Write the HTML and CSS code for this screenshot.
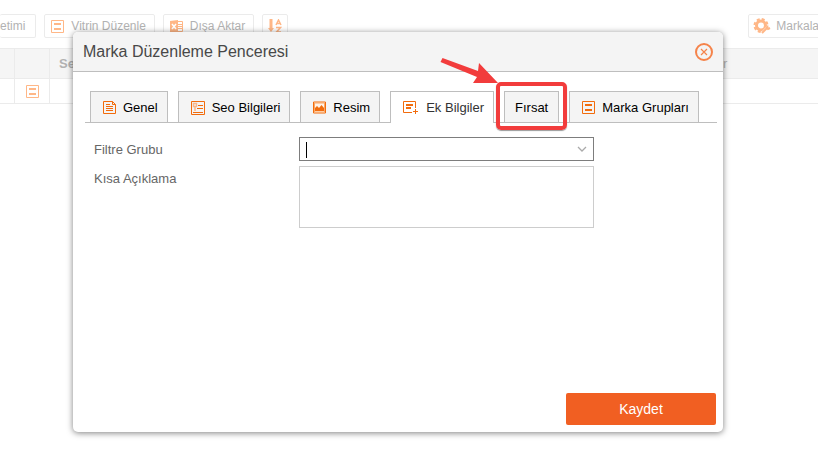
FILE: index.html
```html
<!DOCTYPE html>
<html lang="tr">
<head>
<meta charset="utf-8">
<title>Marka Düzenleme Penceresi</title>
<link rel="stylesheet" href="styles.css">
</head>
<body>
<svg class="symbols" aria-hidden="true">
  <symbol id="form" viewBox="0 0 13 13"><path d="M.5.5h12v12H.5z" fill="none" stroke="currentColor"/><path d="M3 3h7v2H3zM3 8h7v2H3z" fill="currentColor"/></symbol>
</svg>
<main class="page">
  <div class="toolbar">
    <button class="tool tool-cut">etimi</button>
    <button class="tool"><svg class="icon"><use href="#form"/></svg>Vitrin Düzenle</button>
    <button class="tool tool-export"><svg class="icon" viewBox="0 0 13 13"><path d="M0 1L8 0v13L0 12z" fill="currentColor"/><path d="M8 1.500h4.500v10H8M8 4.500h4M8 6.500h4M8 8.500h4" fill="none" stroke="currentColor"/><path d="M2 4l4 5M6 4L2 9" stroke="#fff" stroke-width="1.500"/></svg>Dışa Aktar</button>
    <button class="tool tool-sort" aria-label="Sırala"><svg class="sort" viewBox="0 0 14 14"><path d="M1.500 0h3v9H6L3 13 0 9h1.500z" fill="currentColor"/><path d="M8 6l2.500-5L13 6M9 4.500h3M8 8.500h4.500L8.500 13H13" fill="none" stroke="currentColor" stroke-width="1.500"/></svg></button>
    <button class="tool tool-brands"><svg class="gear" viewBox="0 0 18 16"><circle cx="8" cy="7.500" r="4.500" fill="none" stroke="currentColor" stroke-width="3"/><circle cx="8" cy="7.500" r="6.500" fill="none" stroke="currentColor" stroke-width="2" stroke-dasharray="3 2.100"/><path d="M9 16l6-6" stroke="#fff" stroke-width="4"/><path d="M9 15l6-6m-2 0l2 2 2-1" fill="none" stroke="currentColor" stroke-width="2"/></svg>Markala</button>
  </div>
  <table class="grid">
    <thead><tr><th class="c1"></th><th class="c2"></th><th class="c3">Seo</th><th class="c4">r</th></tr></thead>
    <tbody><tr><td></td><td class="c2"><svg class="icon"><use href="#form"/></svg></td><td></td><td class="c4"></td></tr></tbody>
  </table>
</main>

<section class="dialog" role="dialog" aria-labelledby="title">
  <header class="dialog-head">
    <h1 id="title">Marka Düzenleme Penceresi</h1>
    <button class="close" aria-label="Kapat"><svg viewBox="0 0 18 18"><circle cx="9" cy="9" r="8" fill="none" stroke="currentColor" stroke-width="2"/><path d="M6 6l6 6M12 6l-6 6" stroke="currentColor" stroke-width="1.200"/></svg></button>
  </header>
  <div class="tabs" role="tablist">
    <button class="tab" role="tab"><svg class="icon" viewBox="0 0 13 13"><path d="M.5.5h9l3 3v9H.5zM9.500.5v3h3M3 3.500h4M3 5.500h7M3 7.500h7M3 9.500h7" fill="none" stroke="currentColor"/></svg>Genel</button>
    <button class="tab" role="tab"><svg class="icon icon-seo" viewBox="0 0 14 14"><path d="M.5.5h13v13H.5zM7 4.500h5M6 7.500h6M2 11.500h10" fill="none" stroke="currentColor"/><path d="M2.500 2.500h3v3h-3zM4 6v4" fill="none" stroke="#f7b78b" stroke-width="1.500"/></svg>Seo Bilgileri</button>
    <button class="tab" role="tab"><svg class="icon" viewBox="0 0 13 13"><path d="M.5 1h12v11H.5z" fill="#fff3e8" stroke="currentColor"/><path d="M1.500 2h10v9h-10z" fill="none" stroke="#fba866"/><path d="M2 10V7l2-2 2 2 2.500-3L11 7v3z" fill="currentColor"/></svg>Resim</button>
    <button class="tab active" role="tab" aria-selected="true"><svg class="icon icon-extra" viewBox="0 0 16 14"><path d="M12.500 7V.5H.5v11H9M12.500 8v5M10 10.500h5" fill="none" stroke="currentColor"/><path d="M3 3h7v2H3zM3 6h5v2H3z" fill="currentColor"/></svg>Ek Bilgiler</button>
    <button class="tab marked" role="tab">Fırsat
      <span class="mark"></span>
      <svg class="arrow" viewBox="0 0 60 30"><path d="M2.500 1L38 14l1-8L58 26l-25 0 4-6L0.500 5z" fill="#f23c3c"/></svg>
    </button>
    <button class="tab" role="tab"><svg class="icon"><use href="#form"/></svg>Marka Grupları</button>
  </div>
  <form class="fields">
    <label for="group">Filtre Grubu</label>
    <div class="combo"><input id="group" type="text"><span class="caret"></span><svg class="chevron" viewBox="0 0 10 6"><path d="M1 1l4 4 4-4" fill="none" stroke="currentColor" stroke-width="1.300"/></svg></div>
    <label for="desc">Kısa Açıklama</label>
    <textarea id="desc"></textarea>
  </form>
  <footer class="dialog-foot"><button class="save">Kaydet</button></footer>
</section>
</body>
</html>
```
FILE: styles.css
```css
* { box-sizing: border-box; }
body { margin: 0; background: #fff; font: 13px/16px "Liberation Sans", Arial, sans-serif; overflow: hidden; }
button, input, textarea { font: inherit; }
button { cursor: pointer; }
.symbols { position: absolute; width: 0; height: 0; }
.icon { width: 13px; height: 13px; flex: none; color: #f26c0d; }

.page { color: #b2b2b2; }
.page .icon, .sort, .gear { color: #ffb787; }
.toolbar { display: flex; gap: 8px; padding-top: 14px; height: 48px; overflow: hidden; }
.tool { display: flex; flex: none; align-items: center; gap: 7px; height: 24px; padding: 0 8px 0 6px; border: 1px solid #ebebeb; border-radius: 2px; background: #fff; color: inherit; font-size: 12px; white-space: nowrap; }
.tool-cut { border-left: 0; padding: 0 10px 0 0; }
.tool-sort { padding: 0 5px; }
.sort { width: 14px; height: 14px; }
.tool-brands { margin-left: auto; margin-right: -10px; padding-left: 4px; gap: 5px; }
.gear { width: 18px; height: 16px; }
.grid { width: 100%; border-collapse: separate; border-spacing: 0; table-layout: fixed; border-top: 1px solid #ebebeb; }
.grid th, .grid td { padding: 0 9px; border: 0 solid #ebebeb; border-width: 0 1px 1px 0; height: 30px; text-align: left; }
.grid td { height: 25px; }
.grid th { background: #f5f5f5; }
.grid .c1 { width: 15px; padding: 0; }
.grid .c2 { width: 35px; padding: 0; text-align: center; }
.grid td .icon { display: block; margin: 0 auto; }
.grid .c4 { width: 104px; border-right: 0; font-weight: 400; }

.dialog { position: absolute; top: 32px; left: calc(50% - 336px); width: 650px; min-height: 400px; display: flex; flex-direction: column; border-radius: 5px; background: #fff; box-shadow: 0 1px 6px rgba(0, 0, 0, .5); }
.dialog-head { display: flex; align-items: center; justify-content: space-between; height: 40px; padding: 0 10px; border-bottom: 1px solid #bebebe; border-radius: 5px 5px 0 0; background: #f4f4f4; }
h1 { margin: 0; font-size: 16px; font-weight: 400; line-height: 20px; color: #484848; }
.close { width: 18px; height: 18px; padding: 0; border: 0; background: none; color: #f5834a; }
.close svg { display: block; }
.tabs { display: flex; gap: 10px; margin: 19px 6px 0 12px; padding: 0 5px; border-bottom: 1px solid #bebebe; }
.tab { position: relative; display: flex; flex: none; align-items: center; gap: 7px; height: 31px; padding: 1px 9px 0 12px; border: 1px solid #bebebe; border-bottom: 0; background: #f4f4f4; color: #000; white-space: nowrap; }
.tab.active { height: 32px; margin-bottom: -1px; background: #fff; color: #333; }
.icon-seo { width: 14px; height: 14px; }
.icon-extra { width: 16px; height: 14px; }
.tab.marked { padding: 1px 10px 0; }
.mark { position: absolute; inset: -10px -9px -8px; border: 4px solid #f23c3c; border-radius: 5px; box-shadow: 0 1px 1px rgba(0, 0, 0, .4); }
.arrow { position: absolute; left: -65px; top: -35px; width: 60px; height: 30px; z-index: 1; }
.fields { display: grid; grid-template-columns: 205px 295px; row-gap: 5px; padding: 14px 21px 0; color: #666; }
.fields label { padding-top: 5px; }
.combo { position: relative; height: 24px; }
.combo input { width: 100%; height: 24px; padding: 0 24px 0 6px; border: 1px solid #7d7d7d; background: #fff; outline: none; }
.caret { position: absolute; left: 7px; top: 5px; width: 1px; height: 16px; background: #000; }
.chevron { position: absolute; right: 7px; top: 9px; width: 10px; height: 6px; color: #aaa; }
textarea { display: block; width: 100%; height: 62px; border: 1px solid #cdcdcd; background: #fff; resize: none; }
.dialog-foot { display: flex; justify-content: flex-end; margin-top: auto; padding: 7px; }
.save { width: 150px; height: 32px; border: 0; border-radius: 2px; background: #f15f22; color: #fff; font-size: 14px; }
```
